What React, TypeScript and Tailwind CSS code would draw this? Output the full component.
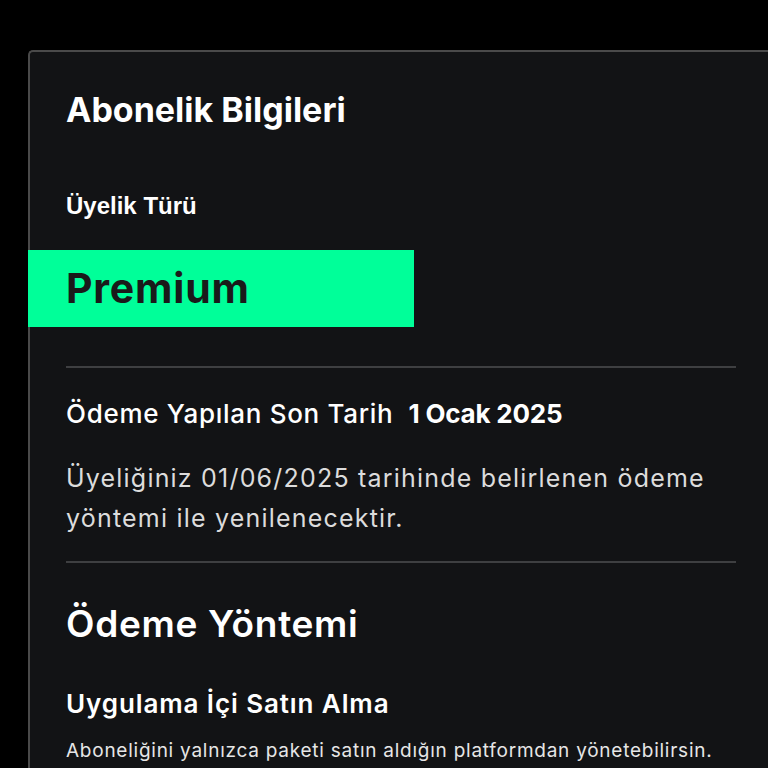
import React from "react";

export default function App() {
  return (
    <div className="w-[768px] h-[768px] bg-black overflow-hidden" style={{ fontFamily: "Inter, 'Noto Sans', sans-serif" }}>
      <div className="ml-[28px] mt-[50px] w-[780px] h-[760px] bg-[#121315] border-t-2 border-l-2 border-[#4a4a4a] rounded-tl-[5px] pl-[36px] pt-[41px]">
        <div className="w-[670px] flex flex-col">
          <h1 className="text-[34px] leading-none font-bold text-white">Abonelik Bilgileri</h1>
          <div className="mt-[67px] text-[24px] leading-none font-bold text-white" style={{ fontFamily: "'Liberation Sans', Arial, sans-serif" }}>Üyelik Türü</div>
          <div className="mt-[32px] -ml-[38px] w-[386px] h-[77px] bg-[#00ff99] flex items-center pl-[38px]">
            <span className="text-[41px] leading-none font-bold tracking-[0.8px] text-[#1a1a1a]">Premium</span>
          </div>
          <div className="mt-[39px] h-[2px] bg-[#3e3f41]" />
          <div className="mt-[33px] flex items-baseline text-[26px] leading-none text-white">
            <span className="font-medium tracking-[0.7px]">Ödeme Yapılan Son Tarih</span>
            <span className="ml-[15px] font-bold tracking-[-0.2px]">1 Ocak 2025</span>
          </div>
          <p className="mt-[31px] text-[25px] leading-[40px] tracking-[1.2px] text-[#dcdcdc]">
            Üyeliğiniz 01/06/2025 tarihinde belirlenen ödeme yöntemi ile yenilenecektir.
          </p>
          <div className="mt-[23px] h-[2px] bg-[#3e3f41]" />
          <h2 className="mt-[42px] text-[37px] leading-none font-semibold tracking-[0.7px] text-white">Ödeme Yöntemi</h2>
          <h3 className="mt-[49px] text-[26px] leading-none font-semibold tracking-[0.9px] text-white">Uygulama İçi Satın Alma</h3>
          <p className="mt-[24px] text-[19px] leading-none tracking-[0.75px] text-[#e6e6e6]">Aboneliğini yalnızca paketi satın aldığın platformdan yönetebilirsin.</p>
        </div>
      </div>
    </div>
  );
}
